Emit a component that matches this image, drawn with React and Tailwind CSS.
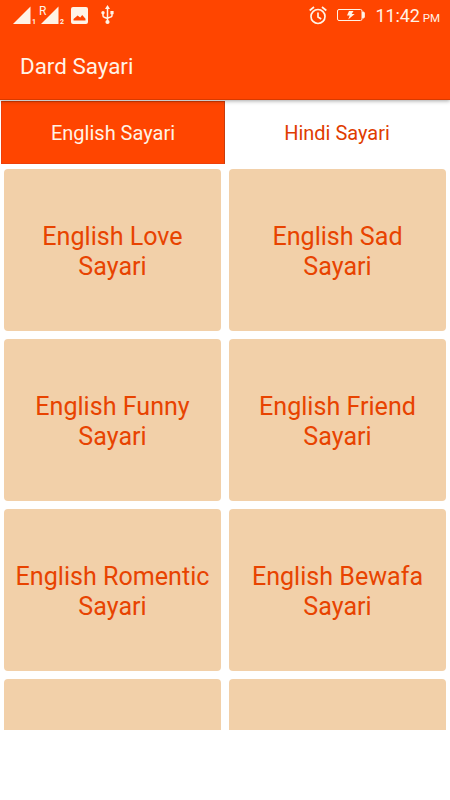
import React, { useState } from 'react';

const categories = [
  'English Love Sayari',
  'English Sad Sayari',
  'English Funny Sayari',
  'English Friend Sayari',
  'English Romentic Sayari',
  'English Bewafa Sayari',
];

const tabs = ['English Sayari', 'Hindi Sayari'];

function SignalIcon({ sim, roaming }) {
  return (
    <svg width="26" height="22" viewBox="0 0 26 22" fill="currentColor" className="overflow-visible">
      <path d="M17.5 1.5V19H0z" />
      {roaming && (
        <text x="-2" y="10" fontSize="12" fontFamily="Roboto, sans-serif" stroke="#ff4500" strokeWidth="2" paintOrder="stroke">R</text>
      )}
      <text x="19" y="18.5" fontSize="7" fontWeight="700" fontFamily="Roboto, sans-serif">{sim}</text>
    </svg>
  );
}

function ImageIcon() {
  return (
    <svg width="17" height="17" viewBox="0 0 17 17" fill="currentColor">
      <path fillRule="evenodd" d="M2 0h13a2 2 0 0 1 2 2v13a2 2 0 0 1-2 2H2a2 2 0 0 1-2-2V2a2 2 0 0 1 2-2zM2.5 13.5h12v-1.8L11.2 8l-2 2.5-2.6-2-4.1 3.6z" />
    </svg>
  );
}

function UsbIcon() {
  return (
    <svg width="13" height="20" viewBox="0 0 13 20" fill="none" stroke="currentColor" strokeWidth="1.5">
      <path d="M6.5 3v13M2 8.5v2.3q0 1.2 1.2 1.4l3.3 1.3M11 8v2.5q0 1.2-1.2 1.4l-3.3 1.3" />
      <path d="M6.5 0 9 4H4z" fill="currentColor" stroke="none" />
      <circle cx="2" cy="7.8" r="1.7" fill="currentColor" stroke="none" />
      <path d="M9.4 6h3.2v3.2H9.4z" fill="currentColor" stroke="none" />
      <circle cx="6.5" cy="17" r="2.1" fill="currentColor" stroke="none" />
    </svg>
  );
}

function AlarmIcon() {
  return (
    <svg width="18" height="19" viewBox="0 0 18 19" fill="none" stroke="currentColor" strokeWidth="1.7">
      <circle cx="9" cy="10.5" r="7" />
      <path d="M9 6.5V11l3.2 2M.7 4.5 5 1M17.3 4.5 13 1" />
    </svg>
  );
}

function BatteryIcon() {
  return (
    <svg width="28" height="14" viewBox="0 0 28 14" fill="none" stroke="currentColor" strokeWidth="1">
      <rect x=".5" y=".5" width="24.5" height="11" rx="1.5" />
      <path d="M25.5 3h.8q1 0 1 1v4q0 1-1 1h-.8z" fill="currentColor" />
      <path d="M12 2h4.5l-1.8 3h3l-6.5 5.5 1.5-4H10z" fill="currentColor" stroke="none" />
    </svg>
  );
}

function StatusBar() {
  return (
    <div className="flex h-8 items-center justify-between pr-[10px] pl-[13px] text-[#fff3e6]">
      <div className="flex items-center">
        <SignalIcon sim="1" />
        <div className="ml-[2px]">
          <SignalIcon sim="2" roaming />
        </div>
        <div className="mb-[2px] ml-1">
          <ImageIcon />
        </div>
        <div className="mb-[2px] ml-[13px]">
          <UsbIcon />
        </div>
      </div>
      <div className="flex items-center">
        <div className="mb-[2px]">
          <AlarmIcon />
        </div>
        <div className="ml-[10px]">
          <BatteryIcon />
        </div>
        <div className="ml-[10px] flex items-baseline">
          <span className="text-[18px] leading-8 tracking-[-0.1px]">11:42</span>
          <span className="ml-[3px] text-[11.5px]">PM</span>
        </div>
      </div>
    </div>
  );
}

export default function App() {
  const [activeTab, setActiveTab] = useState(0);

  return (
    <div className="h-[800px] w-[450px] overflow-hidden bg-white font-['Roboto',sans-serif]">
      <header className="relative h-[100px] border-b border-[#d83a00] bg-[#ff4500] shadow-[0_1px_4px_rgba(0,0,0,0.35)]">
        <StatusBar />
        <h1 className="pt-[19px] pl-5 text-[22.4px] leading-[30px] text-[#fff3e6]">Dard Sayari</h1>
      </header>

      <div className="flex pt-px pl-px">
        {tabs.map((tab, index) => (
          <button
            key={tab}
            onClick={() => setActiveTab(index)}
            className={`h-[63px] w-56 border text-[20px] ${activeTab === index ? 'border-[#ee400a] border-t-[#d83a00] border-r-[#c83c0c] bg-[#ff4500] text-[#fff3e6]' : 'border-transparent bg-white text-[#e03c00]'}`}
          >
            {tab}
          </button>
        ))}
      </div>

      <div className="mt-[5px] grid h-[561px] auto-rows-[162px] grid-cols-2 gap-2 overflow-hidden px-1">
        {categories.map((name) => (
          <div key={name} className="flex items-center justify-center rounded bg-[#f2d0a9] px-2 pt-1 text-center text-[25.1px] leading-[30px] text-[#e84300]">
            {name}
          </div>
        ))}
        <div className="rounded bg-[#f2d0a9]" />
        <div className="rounded bg-[#f2d0a9]" />
      </div>
    </div>
  );
}
